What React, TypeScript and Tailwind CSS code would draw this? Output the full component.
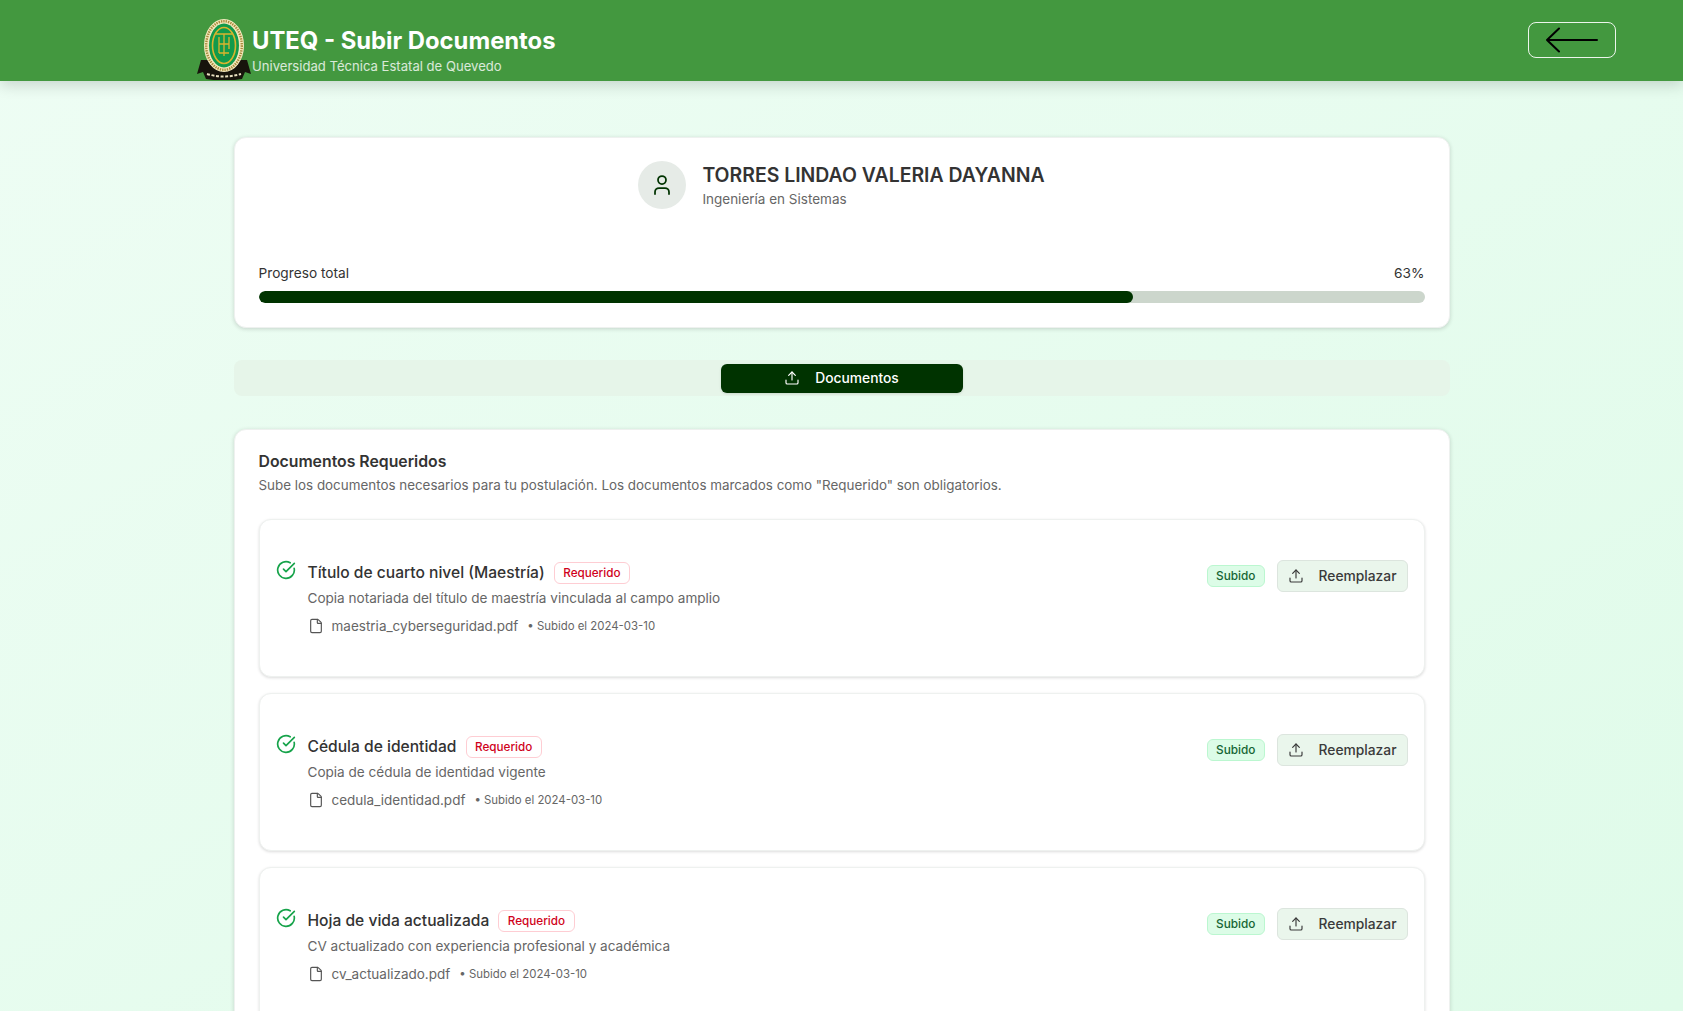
import { CircleCheckBig, File, Upload, User } from "lucide-react";

const DOCS = [
  {
    title: "Título de cuarto nivel (Maestría)",
    desc: "Copia notariada del título de maestría vinculada al campo amplio",
    file: "maestria_cyberseguridad.pdf",
  },
  {
    title: "Cédula de identidad",
    desc: "Copia de cédula de identidad vigente",
    file: "cedula_identidad.pdf",
  },
  {
    title: "Hoja de vida actualizada",
    desc: "CV actualizado con experiencia profesional y académica",
    file: "cv_actualizado.pdf",
  },
];

function Logo() {
  return (
    <svg width="54" height="61" viewBox="0 0 54 61" className="shrink-0">
      <path d="M4 41 L0 55 L6 53 L9 60 Q27 63 45 60 L48 53 L54 55 L50 41 Z" fill="#17140c" />
      <ellipse cx="27" cy="26.5" rx="20" ry="26.5" fill="#f4e9bd" />
      <ellipse cx="27" cy="26.5" rx="17.8" ry="24.3" fill="none" stroke="#a98a3c" strokeWidth="2.4" strokeDasharray="1.4 1" />
      <ellipse cx="27" cy="26.5" rx="15" ry="22" fill="#129a4b" />
      <ellipse cx="27" cy="26.5" rx="11.5" ry="18" fill="none" stroke="#d9b42e" strokeWidth="1.6" />
      <path d="M19 15 H35 M27 15 V37 M22 18 V34 M22 34 H32 M32 18 V30 M22 25 H32" fill="none" stroke="#d9b42e" strokeWidth="1.3" />
      <path d="M10 55 Q27 60 44 55" fill="none" stroke="#e8e0c0" strokeWidth="2" strokeDasharray="3 1.6" />
    </svg>
  );
}

function DocCard({ title, desc, file }: { title: string; desc: string; file: string }) {
  return (
    <div className="flex h-[158px] shrink-0 items-start justify-between rounded-xl border border-[#eef1ef] bg-white pl-[16px] pr-[16px] pt-[40px] shadow-[0_1px_3px_rgba(0,0,0,0.14)]">
      <div className="flex items-start gap-[12px]">
        <CircleCheckBig className="h-5 w-5 text-[#16a34a]" strokeWidth={2} />
        <div>
          <div className="mt-[1px] flex items-center gap-[9px]">
            <span className="text-[15.6px] font-medium leading-6 text-[#333]">{title}</span>
            <span className="rounded-md border border-[#fecdd3] bg-white px-[8.5px] py-[2px] text-[11.7px] font-medium leading-4 text-[#d0021b]">
              Requerido
            </span>
          </div>
          <p className="mt-[3px] text-[13.55px] leading-5 text-[#666]">{desc}</p>
          <div className="mt-[8px] flex items-center">
            <File className="h-4 w-4 text-[#555]" strokeWidth={1.75} />
            <span className="ml-[8px] text-[13.5px] leading-5 text-[#666]">{file}</span>
            <span className="ml-[9px] text-[11.4px] leading-4 text-[#666]">• Subido el 2024-03-10</span>
          </div>
        </div>
      </div>
      <div className="flex items-center gap-[12px]">
        <span className="rounded-md border border-[#bbf7d0] bg-[#dcfce7] px-2 py-[2px] text-[11.8px] font-medium leading-4 text-[#166534]">
          Subido
        </span>
        <button className="flex h-8 w-[131px] items-center justify-between rounded-md border border-[#dce5de] bg-[#eaf6ec] px-[10px] text-[13.8px] font-medium text-[#3a3a3a]">
          <Upload className="h-4 w-4" strokeWidth={1.75} />
          <span>Reemplazar</span>
        </button>
      </div>
    </div>
  );
}

export default function App() {
  return (
    <div className="h-screen overflow-hidden bg-gradient-to-br from-[#eefdf4] to-[#dffbe9] font-['Inter',sans-serif]">
      <header className="flex h-[81px] items-center justify-between bg-[#43983f] pl-[197px] pr-[67px] shadow-[0_4px_14px_rgba(0,0,0,0.16)]">
        <div className="mt-[18px] flex items-center">
          <Logo />
          <div className="ml-[1px]">
            <h1 className="mt-[1px] text-[23.8px] font-bold leading-8 text-white">UTEQ - Subir Documentos</h1>
            <p className="-mt-[1px] text-[13.1px] leading-5 text-white/80">Universidad Técnica Estatal de Quevedo</p>
          </div>
        </div>
        <button className="mb-[1px] flex h-[36px] w-[88px] items-center justify-center rounded-lg border border-white/90">
          <svg width="52" height="26" viewBox="0 0 52 26" fill="none" stroke="black" strokeWidth="2" strokeLinecap="round" strokeLinejoin="round">
            <path d="M51 13 H1 M13 1.5 L1 13 L13 24.5" />
          </svg>
        </button>
      </header>

      <main className="mx-auto flex max-w-7xl flex-col px-8 pt-[56px]">
        <section className="h-[191px] rounded-xl border border-[#eef1ef] bg-white px-6 pt-[23px] shadow-[0_1px_4px_rgba(0,0,0,0.16)]">
          <div className="flex items-center justify-center gap-[16px]">
            <div className="flex h-12 w-12 items-center justify-center rounded-full bg-[#e6ebe7]">
              <User className="h-6 w-6 text-[#003300]" strokeWidth={1.75} />
            </div>
            <div>
              <h2 className="text-[19.45px] font-semibold leading-7 text-[#333]">TORRES LINDAO VALERIA DAYANNA</h2>
              <p className="text-[13.5px] leading-5 text-[#666]">Ingeniería en Sistemas</p>
            </div>
          </div>
          <div className="mt-[54px] flex justify-between text-[13.7px] leading-5 text-[#333]">
            <span>Progreso total</span>
            <span>63%</span>
          </div>
          <div className="mt-[8px] h-3 overflow-hidden rounded-full bg-[#ccd6cc]">
            <div className="h-full rounded-full bg-[#003300]" style={{ width: "75%" }} />
          </div>
        </section>

        <nav className="mt-[32px] flex h-[36px] items-center justify-center rounded-lg bg-[#e6f5e9]">
          <button className="flex h-[29px] w-[242px] items-center justify-center gap-[15px] rounded-md bg-[#003300] text-[13.8px] font-medium text-white shadow-sm">
            <Upload className="h-4 w-4" strokeWidth={1.75} />
            Documentos
          </button>
        </nav>

        <section className="mt-[33px] rounded-xl border border-[#eef1ef] bg-white px-6 pt-[21px] shadow-[0_1px_4px_rgba(0,0,0,0.16)]">
          <h3 className="text-[15.8px] font-semibold leading-[22px] text-[#333]">Documentos Requeridos</h3>
          <p className="mt-[2px] text-[13.4px] leading-5 text-[#666]">
            Sube los documentos necesarios para tu postulación. Los documentos marcados como "Requerido" son obligatorios.
          </p>
          <div className="mt-[24px] flex flex-col gap-[16px]">
            {DOCS.map((d) => (
              <DocCard key={d.file} {...d} />
            ))}
          </div>
        </section>
      </main>
    </div>
  );
}
